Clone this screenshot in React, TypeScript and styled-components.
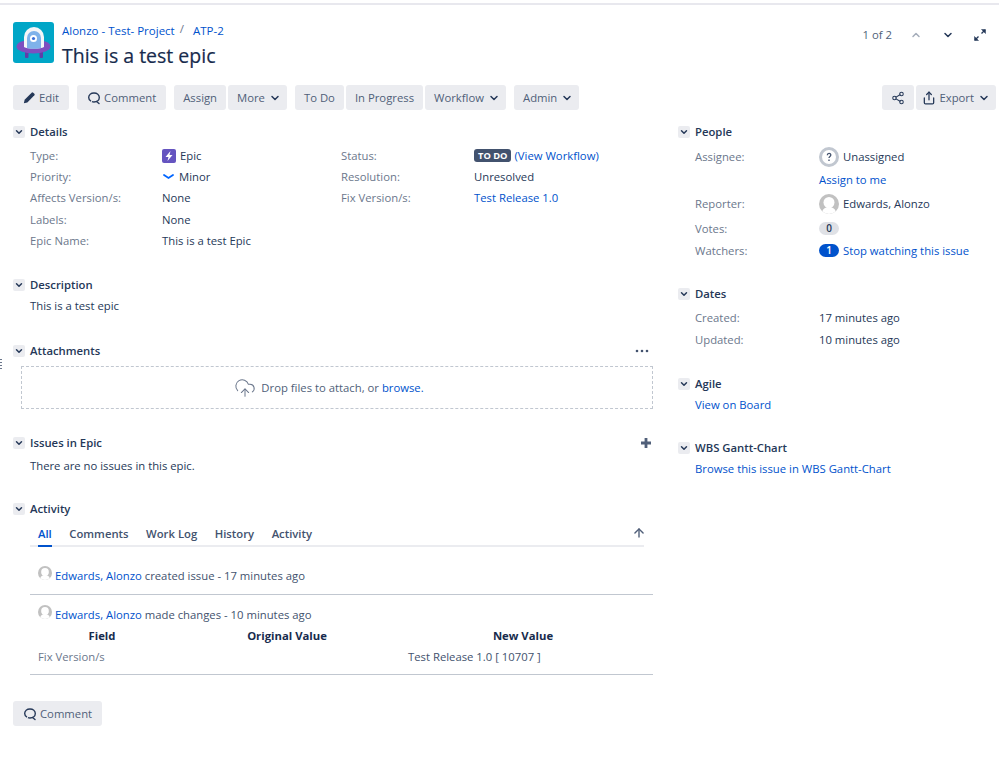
import React from 'react'
import styled, { createGlobalStyle } from 'styled-components'
import { ArrowUp, ChevronDown, ChevronUp, CloudUpload, Share, Share2 } from 'lucide-react'

const GlobalStyle = createGlobalStyle`
  html, body {
    margin: 0;
    padding: 0;
    background: #fff;
  }
  body {
    font-family: "Open Sans", "Noto Sans", "Liberation Sans", sans-serif;
    font-size: 11.3px;
    line-height: 20px;
    color: #172b4d;
  }
  a {
    color: #0052cc;
    text-decoration: none;
  }
`

const Page = styled.div`
  position: relative;
  width: 999px;
  height: 758px;
  box-sizing: border-box;
  padding: 0 2px 0 13px;
  overflow: hidden;
`

const TopLine = styled.div`
  height: 2px;
  margin: 3px -2px 0 -13px;
  background: #e8e8ee;
`

const Header = styled.header`
  display: flex;
  align-items: flex-start;
  height: 80px;
  padding-top: 17px;
  box-sizing: border-box;
`

const ProjectAvatar = styled.svg`
  width: 41px;
  height: 41px;
  flex: none;
`

const HeaderText = styled.div`
  margin-left: 8px;
  flex: 1;
`

const Breadcrumbs = styled.div`
  display: flex;
  height: 18px;
  font-size: 11.500px;
  line-height: 17px;
  span {
    margin: -2px 9px 0 5px;
    color: #6b778c;
  }
`

const Title = styled.h1`
  margin: 2px 0 0;
  font-size: 19.500px;
  line-height: 28px;
  font-weight: 400;
  color: #172b4d;
  -webkit-text-stroke: 0.2px #172b4d;
`

const Pager = styled.div`
  display: flex;
  align-items: center;
  height: 20px;
  margin: 3px 1px 0 0;
  color: #505f79;
`

const PagerCount = styled.span`
  margin-right: 8px;
`

const PagerButton = styled.span<{ $muted?: boolean }>`
  display: flex;
  width: 32px;
  justify-content: center;
  color: ${p => (p.$muted ? '#a5adba' : '#253858')};
`

const Toolbar = styled.div`
  display: flex;
  align-items: center;
  height: 25px;
`

const Group = styled.div<{ $push?: boolean }>`
  display: flex;
  gap: 2px;
  margin-right: 8px;
  margin-left: ${p => (p.$push ? 'auto' : '0')};
  &:last-child {
    margin-right: ${p => (p.$push ? '1px' : '0')};
  }
`

const Button = styled.button<{ $wide?: boolean; $left?: number }>`
  display: flex;
  align-items: center;
  gap: 3px;
  height: 25px;
  padding: 0 ${p => (p.$wide ? 10 : 9)}px 0 ${p => p.$left ?? (p.$wide ? 10 : 9)}px;
  border: 0;
  border-radius: 3px;
  background: #ebecf0;
  color: #505f79;
  font: inherit;
  svg {
    color: #253858;
    flex: none;
  }
`

const Caret = styled(ChevronDown).attrs({ size: 12, strokeWidth: 3 })`
  margin: 0 -3px 0 1px;
`

const Columns = styled.div`
  display: grid;
  grid-template-columns: 640px 318px;
  column-gap: 25px;
  margin-top: 12px;
`

const Section = styled.section<{ $gap?: number }>`
  margin-bottom: ${p => p.$gap ?? 24}px;
`

const SectionHead = styled.div`
  display: flex;
  align-items: center;
  height: 20px;
  margin-bottom: 1px;
  font-weight: 600;
  color: #253858;
`

const Toggle = styled.span`
  display: flex;
  align-items: center;
  justify-content: center;
  width: 12px;
  height: 12px;
  margin-right: 5px;
  border-radius: 2px;
  background: #ebecf0;
  color: #253858;
`

const HeadAction = styled.span`
  display: flex;
  margin-left: auto;
  margin-right: 2px;
  color: #505f79;
`

const Body = styled.div<{ $top?: number }>`
  padding: ${p => p.$top ?? 0}px 0 0 17px;
`

const DetailGrid = styled.div`
  display: grid;
  grid-template-columns: 311px 1fr;
`

const Row = styled.div<{ $label?: number; $height?: number }>`
  display: grid;
  grid-template-columns: ${p => p.$label ?? 132}px 1fr;
  align-items: center;
  height: ${p => p.$height ?? 21.3}px;
`

const Label = styled.span`
  color: #6b778c;
`

const Value = styled.span`
  display: flex;
  align-items: center;
  gap: 4px;
  color: #253858;
`

const StatusLozenge = styled.span`
  height: 13px;
  margin-right: -1px;
  padding: 0 4px;
  border-radius: 3px;
  background: #42526e;
  color: #fff;
  font-size: 9.300px;
  line-height: 13px;
  font-weight: 700;
`

const Badge = styled.span<{ $active?: boolean }>`
  width: 20px;
  height: 13px;
  border-radius: 7px;
  background: ${p => (p.$active ? '#0052cc' : '#dfe1e6')};
  color: ${p => (p.$active ? '#fff' : '#253858')};
  font-size: 10px;
  line-height: 13px;
  font-weight: 600;
  text-align: center;
`

const DropZone = styled.div`
  display: flex;
  align-items: center;
  justify-content: center;
  gap: 5px;
  height: 43px;
  box-sizing: border-box;
  margin: 5px 0 0 8px;
  padding-right: 16px;
  border: 1px dashed #c1c7d0;
  color: #505f79;
  svg {
    color: #6b778c;
  }
`

const TabBar = styled.div`
  display: flex;
  align-items: flex-end;
  gap: 17.500px;
  height: 27px;
  width: 614px;
  padding-left: 8px;
  box-sizing: border-box;
  border-bottom: 2px solid #ebecf0;
`

const Tab = styled.span<{ $active?: boolean }>`
  height: 21px;
  margin-bottom: -2px;
  border-bottom: 2px solid ${p => (p.$active ? '#0052cc' : 'transparent')};
  color: ${p => (p.$active ? '#0052cc' : '#42526e')};
  font-weight: 600;
  line-height: 20px;
`

const TabTop = styled.span`
  display: flex;
  margin: 0 -2px 5px auto;
  color: #505f79;
`

const Entry = styled.div`
  padding-left: 8px;
  border-bottom: 1px solid #c1c7d0;
  color: #42526e;
`

const EntryLine = styled.div<{ $height: number }>`
  display: flex;
  align-items: center;
  box-sizing: border-box;
  height: ${p => p.$height}px;
  padding-top: 10px;
  gap: 3px;
  white-space: pre;
`

const SmallAvatar = styled.span`
  display: flex;
  margin-top: -6px;
  flex: none;
`

const ChangeTable = styled.div`
  display: grid;
  grid-template-columns: 128px 242px 230px;
  grid-auto-rows: 21px;
  align-items: center;
  padding-bottom: 7px;
`

const ChangeHead = styled.span`
  font-weight: 700;
  text-align: center;
  color: #172b4d;
`

const ChangeCell = styled.span<{ $muted?: boolean }>`
  color: ${p => (p.$muted ? '#6b778c' : '#42526e')};
`

const Sash = styled.div`
  position: absolute;
  left: 0;
  top: 359px;
  width: 2px;
  height: 12px;
  background: repeating-linear-gradient(#6b778c 0 1px, #fff 1px 3px);
`

const Person = ({ size = 20 }: { size?: number }) => (
  <svg width={size} height={size} viewBox="0 0 20 20">
    <clipPath id="person-clip">
      <circle cx="10" cy="10" r="10" />
    </clipPath>
    <g clipPath="url(#person-clip)">
      <rect width="20" height="20" fill="#c1c1c1" />
      <circle cx="10" cy="8.500" r="5.500" fill="#fff" />
      <path d="M3 20c0-5 3-7 7-7s7 2 7 7z" fill="#fff" />
    </g>
  </svg>
)

const CommentIcon = () => (
  <svg width="14" height="14" viewBox="0 0 14 14" fill="none" stroke="#253858" strokeWidth="1.400">
    <path d="M7 2c3 0 5.300 1.900 5.300 4.500S10 11 7 11c-.8 0-1.500-.1-2.100-.3M7 2C4 2 1.700 3.900 1.700 6.500c0 1.600.9 3 2.300 3.700" />
    <path d="M9.500 10.500l2.500 2" strokeLinecap="round" />
  </svg>
)

const SOFT_CHEVRON = { size: 12, strokeWidth: 3 }

const SectionTitle = ({ title, action }: { title: string; action?: React.ReactNode }) => (
  <SectionHead>
    <Toggle>
      <ChevronDown size={10} strokeWidth={3.5} />
    </Toggle>
    {title}
    {action && <HeadAction>{action}</HeadAction>}
  </SectionHead>
)

const App = () => (
  <>
    <GlobalStyle />
    <Page>
      <TopLine />
      <Header>
        <ProjectAvatar viewBox="0 0 41 41">
          <rect width="41" height="41" rx="3" fill="#00a6c7" />
          <rect x="12" y="29" width="3.500" height="7" rx="1" fill="#5e3ea8" />
          <rect x="26.500" y="29" width="3.500" height="7" rx="1" fill="#5e3ea8" />
          <ellipse cx="20.500" cy="24.500" rx="17" ry="7" fill="#7d4fc0" />
          <path d="M11 25V15a10 10 0 0 1 20 0v10c-3 2-17 2-20 0z" fill="#f4f6f8" />
          <path d="M14 26V16a7 7 0 0 1 14 0v10c-2 1-12 1-14 0z" fill="#7fb2ea" />
          <circle cx="20.500" cy="16.500" r="3.500" fill="#fff" />
          <circle cx="20.500" cy="16.500" r="1.600" fill="#3a6fd8" />
        </ProjectAvatar>
        <HeaderText>
          <Breadcrumbs>
            <a href="#">Alonzo - Test- Project</a>
            <span>/</span>
            <a href="#">ATP-2</a>
          </Breadcrumbs>
          <Title>This is a test epic</Title>
        </HeaderText>
        <Pager>
          <PagerCount>1 of 2</PagerCount>
          <PagerButton $muted>
            <ChevronUp {...SOFT_CHEVRON} />
          </PagerButton>
          <PagerButton>
            <ChevronDown {...SOFT_CHEVRON} />
          </PagerButton>
          <PagerButton>
            <svg width="14" height="14" viewBox="0 0 14 14" fill="#253858" stroke="#253858">
              <path d="M8.500 5.500L12 2M2 12l3.500-3.500" strokeWidth="1.400" />
              <path d="M8.500 1.500h4v4zM1.500 8.500v4h4z" strokeWidth="0.500" />
            </svg>
          </PagerButton>
        </Pager>
      </Header>

      <Toolbar>
        <Group>
          <Button $wide>
            <svg width="13" height="13" viewBox="0 0 12 12" fill="#253858">
              <path d="M.8 11.200l.7-3.200L8 1.500a1 1 0 0 1 1.400 0l1.100 1.100a1 1 0 0 1 0 1.400L4 10.500z" />
            </svg>
            Edit
          </Button>
        </Group>
        <Group>
          <Button $wide>
            <CommentIcon />
            Comment
          </Button>
        </Group>
        <Group>
          <Button>Assign</Button>
          <Button>
            More <Caret />
          </Button>
        </Group>
        <Group>
          <Button>To Do</Button>
          <Button>In Progress</Button>
          <Button>
            Workflow <Caret />
          </Button>
        </Group>
        <Group>
          <Button>
            Admin <Caret />
          </Button>
        </Group>
        <Group $push>
          <Button>
            <Share2 size={14} strokeWidth={1.8} />
          </Button>
          <Button $left={6}>
            <Share size={14} strokeWidth={2.2} />
            Export <Caret />
          </Button>
        </Group>
      </Toolbar>

      <Columns>
        <main>
          <Section>
            <SectionTitle title="Details" />
            <Body $top={2}>
              <DetailGrid>
                <div>
                  <Row>
                    <Label>Type:</Label>
                    <Value>
                      <svg width="14" height="14" viewBox="0 0 14 14">
                        <rect width="14" height="14" rx="2" fill="#6554c0" />
                        <path d="M8.500 2L3.500 8H6.500L5.500 12 10.500 6H7.500z" fill="#fff" />
                      </svg>
                      Epic
                    </Value>
                  </Row>
                  <Row>
                    <Label>Priority:</Label>
                    <Value>
                      <svg width="13" height="13" viewBox="0 0 13 13" fill="none" stroke="#0065ff" strokeWidth="1.800" strokeLinecap="round">
                        <path d="M2 5l4.500 3L11 5" />
                      </svg>
                      Minor
                    </Value>
                  </Row>
                  <Row>
                    <Label>Affects Version/s:</Label>
                    <Value>None</Value>
                  </Row>
                  <Row>
                    <Label>Labels:</Label>
                    <Value>None</Value>
                  </Row>
                  <Row>
                    <Label>Epic Name:</Label>
                    <Value>This is a test Epic</Value>
                  </Row>
                </div>
                <div>
                  <Row $label={133}>
                    <Label>Status:</Label>
                    <Value>
                      <StatusLozenge>TO DO</StatusLozenge>
                      <a href="#">(View Workflow)</a>
                    </Value>
                  </Row>
                  <Row $label={133}>
                    <Label>Resolution:</Label>
                    <Value>Unresolved</Value>
                  </Row>
                  <Row $label={133}>
                    <Label>Fix Version/s:</Label>
                    <Value>
                      <a href="#">Test Release 1.0</a>
                    </Value>
                  </Row>
                </div>
              </DetailGrid>
            </Body>
          </Section>

          <Section $gap={25}>
            <SectionTitle title="Description" />
            <Body>
              <Value>This is a test epic</Value>
            </Body>
          </Section>

          <Section>
            <SectionTitle
              title="Attachments"
              action={
                <svg width="16" height="4" viewBox="0 0 16 4" fill="#42526e">
                  <circle cx="2" cy="2" r="1.300" />
                  <circle cx="7" cy="2" r="1.300" />
                  <circle cx="12" cy="2" r="1.300" />
                </svg>
              }
            />
            <DropZone>
              <CloudUpload size={22} strokeWidth={1.1} />
              <span>
                Drop files to attach, or <a href="#">browse.</a>
              </span>
            </DropZone>
          </Section>

          <Section $gap={23}>
            <SectionTitle
              title="Issues in Epic"
              action={
                <svg width="10" height="10" viewBox="0 0 10 10" fill="#505f79">
                  <path d="M3.600 0h2.800v3.600H10v2.800H6.400V10H3.600V6.400H0V3.600h3.600z" />
                </svg>
              }
            />
            <Body $top={2}>
              <Value>There are no issues in this epic.</Value>
            </Body>
          </Section>

          <Section $gap={26}>
            <SectionTitle title="Activity" />
            <Body>
              <TabBar>
                <Tab $active>All</Tab>
                <Tab>Comments</Tab>
                <Tab>Work Log</Tab>
                <Tab>History</Tab>
                <Tab>Activity</Tab>
                <TabTop>
                  <ArrowUp size={14} strokeWidth={2.4} />
                </TabTop>
              </TabBar>
              <Entry>
                <EntryLine $height={47}>
                  <SmallAvatar>
                    <Person size={14} />
                  </SmallAvatar>
                  <span>
                    <a href="#">Edwards, Alonzo</a> created issue - 17 minutes ago
                  </span>
                </EntryLine>
              </Entry>
              <Entry>
                <EntryLine $height={30}>
                  <SmallAvatar>
                    <Person size={14} />
                  </SmallAvatar>
                  <span>
                    <a href="#">Edwards, Alonzo</a> made changes - 10 minutes ago
                  </span>
                </EntryLine>
                <ChangeTable>
                  <ChangeHead>Field</ChangeHead>
                  <ChangeHead>Original Value</ChangeHead>
                  <ChangeHead>New Value</ChangeHead>
                  <ChangeCell $muted>Fix Version/s</ChangeCell>
                  <ChangeCell />
                  <ChangeCell>Test Release 1.0 [ 10707 ]</ChangeCell>
                </ChangeTable>
              </Entry>
            </Body>
          </Section>

          <Group>
            <Button $wide>
              <CommentIcon />
              Comment
            </Button>
          </Group>
        </main>

        <aside>
          <Section $gap={22}>
            <SectionTitle title="People" />
            <Body $top={2}>
              <Row $label={124} $height={24}>
                <Label>Assignee:</Label>
                <Value>
                  <svg width="20" height="20" viewBox="0 0 20 20">
                    <circle cx="10" cy="10" r="8.500" fill="#fff" stroke="#c1c7d0" strokeWidth="3" />
                    <path d="M8.300 8.200c0-2.300 3.500-2.300 3.500-.2 0 1.500-1.800 1.300-1.800 3M10 12.500v1.500" fill="none" stroke="#42526e" strokeWidth="1.300" />
                  </svg>
                  Unassigned
                </Value>
              </Row>
              <Row $label={124} $height={21}>
                <span />
                <a href="#">Assign to me</a>
              </Row>
              <Row $label={124} $height={28}>
                <Label>Reporter:</Label>
                <Value>
                  <Person />
                  Edwards, Alonzo
                </Value>
              </Row>
              <Row $label={124} $height={21}>
                <Label>Votes:</Label>
                <Value>
                  <Badge>0</Badge>
                </Value>
              </Row>
              <Row $label={124} $height={23}>
                <Label>Watchers:</Label>
                <Value>
                  <Badge $active>1</Badge>
                  <a href="#">Stop watching this issue</a>
                </Value>
              </Row>
            </Body>
          </Section>

          <Section $gap={23}>
            <SectionTitle title="Dates" />
            <Body $top={2}>
              <Row $label={124} $height={22}>
                <Label>Created:</Label>
                <Value>17 minutes ago</Value>
              </Row>
              <Row $label={124} $height={22}>
                <Label>Updated:</Label>
                <Value>10 minutes ago</Value>
              </Row>
            </Body>
          </Section>

          <Section $gap={23}>
            <SectionTitle title="Agile" />
            <Body>
              <a href="#">View on Board</a>
            </Body>
          </Section>

          <Section $gap={23}>
            <SectionTitle title="WBS Gantt-Chart" />
            <Body>
              <a href="#">Browse this issue in WBS Gantt-Chart</a>
            </Body>
          </Section>
        </aside>
      </Columns>
      <Sash />
    </Page>
  </>
)

export default App
